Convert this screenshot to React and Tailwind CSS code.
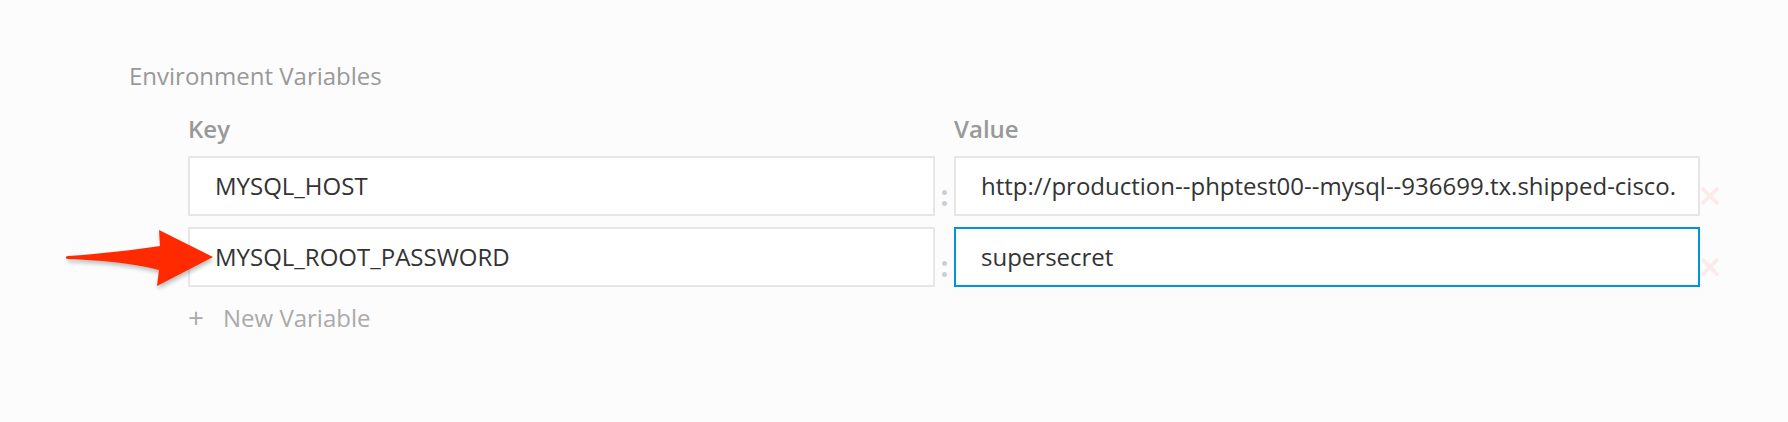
import { X } from 'lucide-react'

const rows = [
  { key: 'MYSQL_HOST', value: 'http://production--phptest00--mysql--936699.tx.shipped-cisco.', focused: false },
  { key: 'MYSQL_ROOT_PASSWORD', value: 'supersecret', focused: true },
]

function Arrow() {
  return (
    <svg
      className="absolute left-[58px] top-[223px] drop-shadow-[1px_3px_2px_rgba(0,0,0,0.25)]"
      width="160"
      height="70"
      viewBox="0 0 160 70"
    >
      <path
        d="M10,33 C40,31 75,27 102,23 L101,7 L155,34 L99,63 L101,47 C75,40 40,37 10,36 C7,35.5 7,33.5 10,33 Z"
        fill="#ff2a00"
      />
    </svg>
  )
}

function VarRow({ item }) {
  return (
    <div className="flex items-stretch">
      <div className="w-[747px] h-[60px] bg-white border-2 border-[#e6e6e6] flex items-center pl-[25px] text-[#333] overflow-hidden whitespace-nowrap">
        {item.key}
      </div>
      <div className="w-[19px] flex flex-col items-center justify-end pb-[10px] gap-[6px]">
        <span className="w-[5px] h-[5px] rounded-full bg-[#c9d0d5]" />
        <span className="w-[5px] h-[5px] rounded-full bg-[#c9d0d5]" />
      </div>
      <div
        className={`w-[746px] h-[60px] bg-white border-2 flex items-center pl-[25px] pr-[20px] text-[#333] overflow-hidden whitespace-nowrap ${
          item.focused ? 'border-[#0096d6]' : 'border-[#e6e6e6]'
        }`}
      >
        {item.value}
      </div>
      <div className="flex items-end pb-[6px] -ml-[4px]">
        <X size={28} strokeWidth={3.2} className="text-[#fdeaea]" />
      </div>
    </div>
  )
}

export default function App() {
  return (
    <div
      className="relative min-h-screen bg-[#fcfcfc] pl-[129px] pt-[60px] text-[24px]"
      style={{ fontFamily: '"Open Sans", "Noto Sans", sans-serif' }}
    >
      <h3 className="text-[#999] leading-[32px] font-normal">Environment Variables</h3>
      <div className="pl-[59px] pt-[21px]">
        <div className="flex text-[#999] font-semibold leading-[32px] mb-[11px]">
          <span className="w-[766px]">Key</span>
          <span>Value</span>
        </div>
        <div className="flex flex-col gap-[11px]">
          {rows.map((r) => (
            <VarRow key={r.key} item={r} />
          ))}
        </div>
        <button className="mt-[15px] flex items-center gap-[19px] text-[#aaa] leading-[32px]">
          <span className="text-[28px] font-normal leading-none -mt-[2px]">+</span>
          <span>New Variable</span>
        </button>
      </div>
      <Arrow />
    </div>
  )
}
